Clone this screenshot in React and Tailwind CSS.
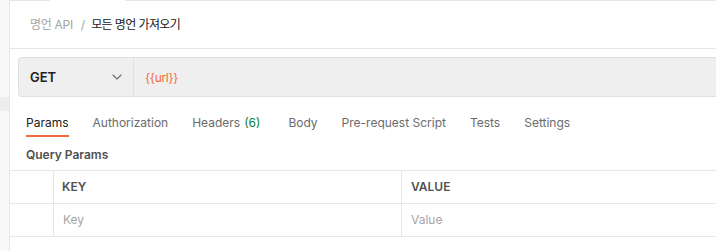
import React from "react";

const font = { fontFamily: "Inter, 'Noto Sans CJK KR', sans-serif" };

function Chevron() {
  return (
    <svg width="10" height="6" viewBox="0 0 10 6" fill="none">
      <path d="M1 1l4 4 4-4" stroke="#6b6b6b" strokeWidth="1.1" strokeLinecap="round" strokeLinejoin="round" />
    </svg>
  );
}

export default function App() {
  const tabs = [
    { label: "Authorization" },
    { label: "Headers", badge: "(6)" },
    { label: "Body" },
    { label: "Pre-request Script" },
    { label: "Tests" },
    { label: "Settings" },
  ];
  return (
    <div className="flex w-[716px] h-[251px] bg-white overflow-hidden" style={font}>
      <div className="w-[10px] shrink-0 bg-[#f9f9f9] border-r border-[#e6e6e6] flex flex-col">
        <div className="h-[97px]" />
        <div className="h-[14px] bg-[#ededed]" />
      </div>
      <div className="flex-1 flex flex-col min-w-0">
        <div className="flex h-px">
          <div className="w-[40px] bg-[#e6e6e6]" />
          <div className="w-[75px]" />
          <div className="flex-1 bg-[#e6e6e6]" />
        </div>
        <div className="h-[48px] border-b border-[#e6e6e6] flex items-center pl-[20px] text-[12px]">
          <span className="text-[#a3a3a3] tracking-[-0.3px]">명언 API</span>
          <span className="text-[#a3a3a3] ml-[8px] mr-[6px]">/</span>
          <span className="text-[#212121] tracking-[-0.6px]">모든 명언 가져오기</span>
        </div>
        <div className="pt-[8px] pl-[8px]">
          <div className="flex h-[40px] bg-[#efefef] border border-[#e0e0e0] border-r-0 rounded-l-[4px]">
            <div className="w-[115px] flex items-center justify-between pl-[11px] pr-[11px] border-r border-[#e0e0e0]">
              <span className="text-[13px] font-semibold text-[#212121] pt-[2px]">GET</span>
              <Chevron />
            </div>
            <div className="flex items-center pl-[11px] pt-[1px] text-[12px] text-[#f26b3a] tracking-[-0.3px]">{"{{url}}"}</div>
          </div>
        </div>
        <div className="flex h-[40px] pl-[16px] text-[12px] text-[#6b6b6b] gap-[24px]">
          <div className="relative flex items-end">
            <span className="text-[#212121] leading-[16px] pb-[6px]">Params</span>
            <div className="absolute left-0 right-0 bottom-0 h-[2px] bg-[#f26b3a]" />
          </div>
          {tabs.map((t) => (
            <div key={t.label} className={`flex items-end ${t.badge ? "mr-[4px]" : ""}`}>
              <span className="leading-[16px] pb-[6px]">{t.label}</span>
              {t.badge && <span className="leading-[16px] pb-[6px] ml-[4px] text-[#0a7d3a]">{t.badge}</span>}
            </div>
          ))}
        </div>
        <div className="h-[33px] flex items-center pt-[2px] pl-[16px] text-[12px] font-semibold text-[#505050]">
          Query Params
        </div>
        <div className="border-t border-b border-[#e6e6e6]">
          <div className="flex h-[33px] border-b border-[#e6e6e6] text-[12px] font-semibold text-[#505050]">
            <div className="w-[44px] border-r border-[#e6e6e6]" />
            <div className="w-[348px] border-r border-[#e6e6e6] flex items-center pl-[8px]">KEY</div>
            <div className="flex-1 flex items-center pl-[9px]">VALUE</div>
          </div>
          <div className="flex h-[32px] text-[12px] text-[#a6a6a6]">
            <div className="w-[44px] border-r border-[#e6e6e6]" />
            <div className="w-[348px] border-r border-[#e6e6e6] flex items-center pl-[9px]">Key</div>
            <div className="flex-1 flex items-center pl-[9px]">Value</div>
          </div>
        </div>
      </div>
    </div>
  );
}
